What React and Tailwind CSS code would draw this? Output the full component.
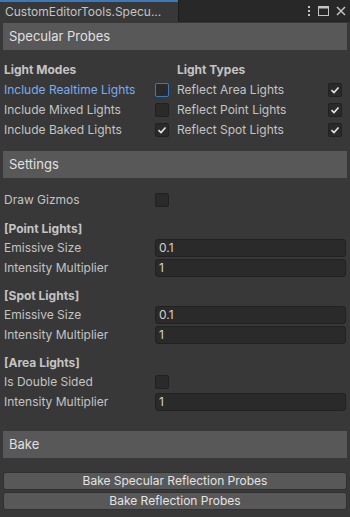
import React from 'react'

const font = { fontFamily: 'Inter, "Noto Sans", sans-serif' }

const Check = ({ checked, focused }) => (
  <div
    className={`w-[14px] h-[14px] rounded-[2px] bg-[#2a2a2a] border flex items-center justify-center ${
      focused ? 'border-[#3a79bb]' : 'border-[#212121]'
    }`}
  >
    {checked && (
      <svg width="10" height="10" viewBox="0 0 10 10">
        <path d="M1.5 5.2 L4 7.5 L8.5 2.5" fill="none" stroke="#e8e8e8" strokeWidth="1.6" />
      </svg>
    )}
  </div>
)

const Header = ({ title }) => (
  <div className="mx-[3px] h-[27px] bg-[#585858] flex items-center px-[6px] text-[13px] text-[#e0e0e0]">
    {title}
  </div>
)

const Row = ({ label, children }) => (
  <div className="flex items-center h-[20px] pl-[4px] pr-[4px]">
    <div className="w-[151px] text-[12px] text-[#c4c4c4]">{label}</div>
    <div className="flex-1 flex items-center">{children}</div>
  </div>
)

const Field = ({ value }) => (
  <div className="w-full h-[18px] rounded-[3px] bg-[#2a2a2a] border border-[#212121] flex items-center px-[3px] text-[12px] text-[#d2d2d2]">
    {value}
  </div>
)

// bold sub-headers like [Point Lights]
const Group = ({ title }) => (
  <div className="h-[18px] flex items-center pl-[4px] text-[12px] font-bold text-[#c4c4c4]">{title}</div>
)

const ToggleRow = ({ label, checked, focused }) => (
  <div className="flex items-center h-[20px]">
    <div className={`w-[151px] text-[12px] ${focused ? 'text-[#7bacf0]' : 'text-[#c4c4c4]'}`}>{label}</div>
    <Check checked={checked} focused={focused} />
  </div>
)

const App = () => {
  return (
    <div className="w-[350px] h-[517px] bg-[#383838] flex flex-col overflow-hidden" style={font}>
      {/* tab bar */}
      <div className="h-[22px] flex bg-[#282828] border-b border-[#232323]">
        <div className="w-[178px] h-[22px] bg-[#383838] border-t-2 border-[#3a79bb] flex items-center pl-[5px] text-[12px] text-[#c4c4c4]">
          CustomEditorTools.Specu...
        </div>
        <div className="w-[1px] bg-[#1c1c1c]" />
        <div className="flex-1 flex items-center justify-end gap-[7px] pr-[4px]">
          <svg width="4" height="12" viewBox="0 0 4 12">
            <rect x="1" y="1" width="2" height="2" fill="#c4c4c4" />
            <rect x="1" y="5" width="2" height="2" fill="#c4c4c4" />
            <rect x="1" y="9" width="2" height="2" fill="#c4c4c4" />
          </svg>
          <svg width="11" height="10" viewBox="0 0 11 10">
            <rect x="0.5" y="0.5" width="10" height="9" fill="none" stroke="#c4c4c4" />
            <rect x="0.5" y="0.5" width="10" height="2" fill="#c4c4c4" />
          </svg>
          <svg width="10" height="10" viewBox="0 0 10 10">
            <path d="M1 1 L9 9 M9 1 L1 9" stroke="#c4c4c4" strokeWidth="1.5" />
          </svg>
        </div>
      </div>

      <div className="pt-[1px]">
        <Header title="Specular Probes" />
      </div>

      <div className="flex pl-[4px] pt-[10px]">
        <div className="w-[173px]">
          <div className="h-[20px] flex items-center text-[12px] font-bold text-[#c4c4c4]">Light Modes</div>
          <ToggleRow label="Include Realtime Lights" focused />
          <ToggleRow label="Include Mixed Lights" />
          <ToggleRow label="Include Baked Lights" checked />
        </div>
        <div className="flex-1">
          <div className="h-[20px] flex items-center text-[12px] font-bold text-[#c4c4c4]">Light Types</div>
          <ToggleRow label="Reflect Area Lights" checked />
          <ToggleRow label="Reflect Point Lights" checked />
          <ToggleRow label="Reflect Spot Lights" checked />
        </div>
      </div>

      <div className="pt-[11px]">
        <Header title="Settings" />
      </div>

      <div className="pt-[12px]">
        <Row label="Draw Gizmos">
          <Check />
        </Row>
        <div className="h-[10px]" />
        <Group title="[Point Lights]" />
        <Row label="Emissive Size">
          <Field value="0.1" />
        </Row>
        <Row label="Intensity Multiplier">
          <Field value="1" />
        </Row>
        <div className="h-[9px]" />
        <Group title="[Spot Lights]" />
        <Row label="Emissive Size">
          <Field value="0.1" />
        </Row>
        <Row label="Intensity Multiplier">
          <Field value="1" />
        </Row>
        <div className="h-[9px]" />
        <Group title="[Area Lights]" />
        <Row label="Is Double Sided">
          <Check />
        </Row>
        <Row label="Intensity Multiplier">
          <Field value="1" />
        </Row>
      </div>

      <div className="pt-[19px]">
        <Header title="Bake" />
      </div>

      <div className="px-[3px] pt-[14px] flex flex-col gap-[2px]">
        <button className="h-[18px] rounded-[3px] bg-[#585858] border border-[#303030] text-[12px] text-[#e4e4e4] flex items-center justify-center">
          Bake Specular Reflection Probes
        </button>
        <button className="h-[18px] rounded-[3px] bg-[#585858] border border-[#303030] text-[12px] text-[#e4e4e4] flex items-center justify-center">
          Bake Reflection Probes
        </button>
      </div>
    </div>
  )
}

export default App
